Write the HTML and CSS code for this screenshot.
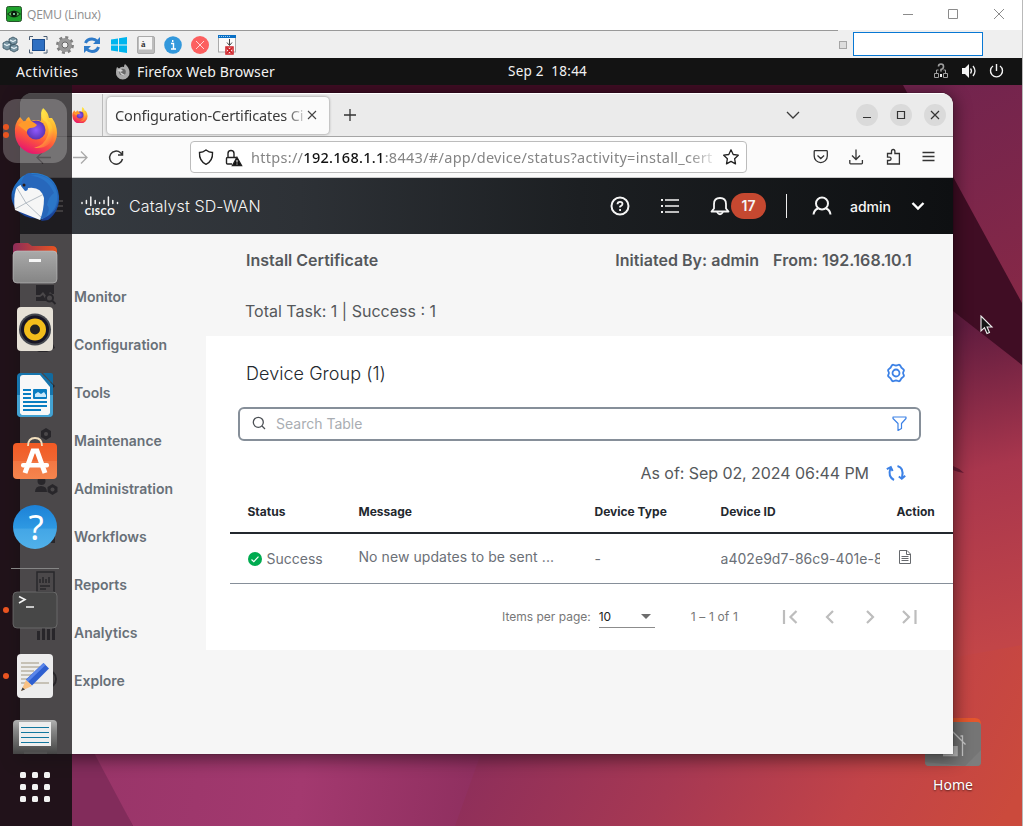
FILE: index.html
```html
<!DOCTYPE html>
<html lang="en">
<head>
<meta charset="utf-8">
<title>QEMU (Linux)</title>
<link rel="stylesheet" href="styles.css">
</head>
<body>
<div class="viewer">
  <header class="viewer-title">
    <svg class="viewer-logo" width="16" height="16" viewBox="0 0 16 16"><rect x=".5" y=".5" width="15" height="15" rx="2" fill="#1fa22c" stroke="#26532a"/><path d="M1 8Q8 1 15 8Q8 15 1 8Z" fill="#123a16"/><path d="M2.500 8Q8 3.500 13.500 8Q8 12.500 2.500 8Z" fill="#5fbd62"/><circle cx="8" cy="8" r="3" fill="#0a1a0c"/><circle cx="8" cy="8" r="1" fill="#9fb"/></svg>
    <span class="viewer-name">QEMU (Linux)</span>
    <svg class="viewer-controls" width="120" height="30" viewBox="0 0 120 30" fill="none" stroke="#8b8b8b"><path d="M1 14.500h10M46.500 9.500h9v9h-9zM92 9l10 10M102 9l-10 10"/></svg>
  </header>
  <div class="viewer-tools">
    <svg width="240" height="28" viewBox="0 0 240 28">
      <g stroke="#35505f" stroke-width=".8" fill="#7895a3"><path d="M9 9l4-2 4 2v4l-4 2-4-2zM3 13l4-2 4 2v5l-4 2-4-2zM10 16l4-2 4 2v4l-4 2-4-2z"/><path d="M4 14l3 1.500 3-1.500M10 10l3 1.500 3-1.500M11 17l3 1.500 3-1.500" stroke="#e3eff4" stroke-width="1.300" fill="none"/></g>
      <rect x="32.500" y="9.500" width="12" height="11" fill="#2e6fc2" stroke="#1d4d8d"/><path d="M29.500 10V6.500H33M43.500 6.500H47V10M47 19.500V23h-3.500M33 23h-3.500v-3.500" fill="none" stroke="#4a5d73"/>
      <g transform="translate(65 15)"><circle r="5" fill="none" stroke="#989898" stroke-width="4"/><circle r="7.700" fill="none" stroke="#808080" stroke-width="2.500" stroke-dasharray="3.020 3.027"/><circle r="3" fill="#efefef" stroke="#666"/></g>
      <g fill="none" stroke="#2f7bc9" stroke-width="3"><path d="M85.500 13Q87 9 92 9q3 0 5.500 2.500M98.500 17Q97 21.500 92 21.500q-3 0-5.500-2.500"/></g><path d="M100 7v7h-7zM84 23v-7h7z" fill="#2f7bc9"/>
      <path d="M111 9.500l7-1v6h-7zM119 8.300l8-1.200v7.400h-8zM111 15.500h7v6l-7-1zM119 15.500h8v7.400l-8-1.200z" fill="#00b5ee"/>
      <rect x="137.500" y="6.500" width="17" height="17" rx="1.500" fill="#bdbdbd" stroke="#aaa"/><rect x="139" y="7" width="13" height="12.500" fill="#f5f5f5"/>
      <circle cx="173" cy="15" r="8.800" fill="#3298dc"/><path d="M171 13.500h2.500v5M171 19h5M172.700 10v2" stroke="#fff" stroke-width="1.400" fill="none"/>
      <circle cx="200" cy="15" r="9" fill="#fc5f5f"/><path d="M196 11l8 8M204 11l-8 8" stroke="#ffd5d5"/>
      <rect x="218.500" y="6" width="17" height="16" fill="#fafafa" stroke="#aaa"/><path d="M218 5h18v3h-18z" fill="#0a70c5"/><path d="M219 6.500h12" stroke="#9fd0f5" stroke-dasharray="1 1"/><path d="M229.500 9v6M227 12.500l2.500 3 2.500-3" stroke="#444" fill="none"/><rect x="226" y="17" width="7" height="7" fill="#fff" stroke="#cf2027" stroke-width="1.500"/><path d="M227 18l5 5m0-5l-5 5" stroke="#cf2027" stroke-width="1.800"/>
      <text x="141" y="17" class="key-glyph">à</text>
    </svg>
    <div class="viewer-side"><i class="mini-box"></i><i class="display-box"></i></div>
  </div>

  <nav class="panel">
    <span class="activities">Activities</span>
    <span class="panel-app"><svg width="16" height="16" viewBox="0 0 16 16"><path d="M2 3l2 1.500Q6 2 9 3q0-2 1-3 4 3 4.500 8A6.800 6.800 0 1 1 1 8Q1 5 2 3z" fill="#a9a9a9"/><circle cx="7.500" cy="8" r="3.300" fill="#686868"/><path d="M2 6l4-1 2 2-3 1q1 4 5 3" fill="#d0d0d0"/></svg><b>Firefox Web Browser</b></span>
    <span class="clock">Sep 2&nbsp; 18:44</span>
    <svg class="tray" width="76" height="20" viewBox="0 0 76 20" fill="none"><g stroke="#a0a0a0"><path d="M3.500 12.500h4v4h-4zM12.500 12.500h4v4h-4zM5.500 12v-3h2M14.500 12v-3h-2"/><path d="M7.500 5.500q0-2.500 2.500-2.500t2.500 2.500T10 8.500v2" stroke-width="1.600"/></g><path d="M10 13v3" stroke="#eee" stroke-width="2"/><path d="M31 7h3l4-4v14l-4-4h-3z" fill="#f4f4f4"/><path d="M39.500 7.500q2 2.500 0 5M42 5q4 5 0 10" stroke="#eee" stroke-width="1.300"/><path d="M62 5a6 6 0 1 0 7 0M65.500 3v7" stroke="#f4f4f4" stroke-width="1.400"/></svg>
  </nav>

  <div class="desktop">
    <svg class="wallpaper" width="1022" height="741" viewBox="0 85 1022 741">
      <defs>
        <linearGradient id="base" gradientUnits="userSpaceOnUse" x1="500" y1="560" x2="1000" y2="826"><stop offset="0" stop-color="#852b5d"/><stop offset=".45" stop-color="#a63853"/><stop offset=".75" stop-color="#c14348"/><stop offset="1" stop-color="#cb4a3c"/></linearGradient>
        <linearGradient id="right" gradientUnits="userSpaceOnUse" x1="945" y1="330" x2="1022" y2="640"><stop offset="0" stop-color="#601c3f"/><stop offset=".45" stop-color="#a8364d"/><stop offset="1" stop-color="#c24548"/></linearGradient>
        <linearGradient id="top" gradientUnits="userSpaceOnUse" x1="930" y1="90" x2="1022" y2="290"><stop offset="0" stop-color="#72244e"/><stop offset="1" stop-color="#852847"/></linearGradient>
        <linearGradient id="leaf" gradientUnits="userSpaceOnUse" x1="100" y1="760" x2="500" y2="826"><stop offset="0" stop-color="#993569"/><stop offset=".5" stop-color="#a3396f"/><stop offset="1" stop-color="#8c2e5d"/></linearGradient>
      </defs>
      <rect y="85" width="1022" height="741" fill="url(#base)"/>
      <path d="M940 300h82v345l-82 15z" fill="url(#right)"/>
      <path d="M0 85h1022v280L953 311 500 430 0 700z" fill="#400d24"/>
      <path d="M903 85h119v218z" fill="url(#top)"/>
      <path d="M953 466q6 2 11 7-7-1-11-3z" fill="#6c1c36"/>
      <path d="M0 560h72l61 266H0z" fill="#401027"/>
      <path d="M72 700l61 126H72z" fill="#822c5b"/>
      <path d="M66 700h434l-45 126H133z" fill="url(#leaf)"/>
    </svg>

    <div class="home">
      <svg width="56" height="48" viewBox="0 0 56 48"><path d="M0 8q0-8 8-8h42q6 0 6 6v20H0z" fill="#e4572d"/><rect y="4" width="56" height="44" rx="4" fill="#757575"/><path d="M0 44q0 4 4 4h48q4 0 4-4V32L40 48z" fill="#7d7d7d"/><path d="M16 29L28 14l12.500 12.500M35.500 18h2v5M37.500 24v14M18 37.500h14V28" fill="none" stroke="#c8c8c8" stroke-width="1.300"/><path d="M28 28h4v10H18v-4h10z" fill="#bcbcbc"/></svg>
      <span>Home</span>
    </div>

    <main class="browser">
      <div class="tabs">
        <div class="pinned"><svg width="16" height="16" viewBox="0 0 44 44"><use href="#fox"/></svg></div>
        <div class="tab"><span class="tab-text">Configuration-Certificates Ci</span><svg width="10" height="10" viewBox="0 0 10 10" stroke="#444" stroke-width="1.100"><path d="M1 1l8 8M9 1l-8 8"/></svg></div>
        <svg class="plus" width="12" height="12" viewBox="0 0 12 12" stroke="#333" stroke-width="1.300"><path d="M6 0v12M0 6h12"/></svg>
        <svg class="chev" width="14" height="8" viewBox="0 0 14 8" fill="none" stroke="#3b3b3b" stroke-width="1.300"><path d="M1 1l6 6 6-6"/></svg>
        <div class="win-buttons">
          <svg viewBox="0 0 22 22"><path d="M7 13.500h8"/></svg>
          <svg viewBox="0 0 22 22"><path d="M7.500 7.500h7v7h-7z"/></svg>
          <svg viewBox="0 0 22 22"><path d="M7 7l8 8M15 7l-8 8"/></svg>
        </div>
      </div>
      <div class="navbar">
        <svg class="nav-arrows" width="110" height="40" viewBox="0 0 110 40" fill="none" stroke-width="1.300"><path d="M31 20.500H17M23 14.500l-6 6 6 6" stroke="#555"/><path d="M53 20.500h14M61 14.500l6 6-6 6" stroke="#a9a9a9"/><path d="M102.500 22a6.500 6.500 0 1 1-2-6.200l2 1.800M102.500 14v4h-4.500" stroke="#333" stroke-width="1.500"/></svg>
        <div class="urlbar">
          <svg width="50" height="22" viewBox="0 0 50 22" fill="none" stroke="#222" stroke-width="1.400"><path d="M9 4q3 2.300 6.500 2.500Q16 15 9 18.300 2 15 2.500 6.500 6 6.300 9 4z"/><path d="M35 18h-4.500q-1 0-1-1v-4.500q0-1 1-1h8.500v1M31 11V7.500a3 3 0 0 1 6 0V11"/><path d="M40 11.500l4.500 8h-9z" fill="#111"/><path d="M40 14v2.500M40 17.500v1" stroke="#fff" stroke-width="1"/></svg>
          <span class="url">https://<b>192.168.1.1</b>:8443/#/app/device/status?activity=install_cert</span>
          <svg width="16" height="16" viewBox="0 0 16 16" fill="none" stroke="#222" stroke-width="1.300" stroke-linejoin="round"><path d="M8 .8l2.200 4.700 5.100.7-3.700 3.500.9 5.200L8 12.400l-4.500 2.500.9-5.200L.7 6.200l5.100-.7z"/></svg>
        </div>
        <svg class="nav-tools" width="126" height="20" viewBox="0 0 126 20" fill="none" stroke="#333" stroke-width="1.300"><path d="M2.200 4.500q0-.8.800-.8h11.500q.800 0 .8.800v4.500a6.550 6.550 0 0 1-13.100 0zM5.500 8.500l3.300 3 3.300-3"/><path d="M44 2.500v10M40 8.500l4 4 4-4M37.800 13v3q0 .8.800.8h11q.8 0 .8-.8v-3"/><path d="M75.500 6.500h4v-2q0-2 1.700-2t1.700 2v2h4.500v10.500H75.500v-3.500h1.800q1.800 0 1.800-1.700t-1.800-1.700h-1.800z"/><path d="M110.500 5.500h12M110.500 9.500h12M110.500 13.500h12"/></svg>
      </div>

      <div class="app-header">
        <svg class="burger" width="12" height="14" viewBox="0 0 12 14" stroke="#eee" stroke-width="1.500"><path d="M0 2h12M0 7h12M0 12h12"/></svg>
        <div class="cisco">
          <svg width="38" height="11" viewBox="0 0 38 11" stroke="#f4f4f4" stroke-width="1.500" stroke-linecap="round"><path d="M1 6.500v1M5.400 4.500v3M9.800 1v8.500M14.200 4.500v3M18.600 6.500v1M23 4.500v3M27.400 1v8.500M31.800 4.500v3M36.500 6.500v1"/></svg>
          <span>CISCO</span>
        </div>
        <span class="product">Catalyst SD-WAN</span>
        <svg class="header-icons" width="122" height="24" viewBox="0 0 122 24" fill="none" stroke="#f5f5f5" stroke-width="2"><circle cx="10" cy="12" r="8.500"/><path d="M7.500 10.300q0-2.500 2.500-2.500t2.500 2.200q0 1.400-2.400 2.600v1M10.100 15v2" stroke-width="1.800"/><path d="M55 6h14M55 12h14M55 18h14" stroke-width="1.700"/><path d="M51 6h2M51 12h2M51 18h2"/><path d="M101.500 17.500h17l-2.500-3V10q0-6-6-6t-6 6v4.500z" stroke-width="1.800" stroke-linejoin="round"/><path d="M107 18q3 4.500 6 0" stroke-width="1.800"/></svg>
        <span class="count">17</span>
        <i class="divider"></i>
        <svg class="user" width="20" height="20" viewBox="0 0 20 20" fill="none" stroke="#f5f5f5" stroke-width="2"><circle cx="10" cy="7.500" r="6"/><path d="M1.500 18.500Q2 14 6 12.500M18.500 18.500Q18 14 14 12.500"/></svg>
        <span class="admin">admin</span>
        <svg class="down" width="14" height="10" viewBox="0 0 14 10" fill="none" stroke="#fff" stroke-width="2.400"><path d="M1.500 2L7 7.500 12.500 2"/></svg>
      </div>

      <div class="app">
        <aside class="menu">
          <div><svg viewBox="0 0 20 20"><path d="M1-1h18v9h-2l-2-2-3 5-4-5-3 3H1zM1 11h4l3-2 3 5v1H1z"/><circle cx="14.500" cy="12" r="3.500" fill="none" stroke="#5f666d" stroke-width="2"/><path d="M17 14.500l3.500 3.500" stroke="#5f666d" stroke-width="2"/></svg><span>Monitor</span></div>
          <div><svg viewBox="0 0 20 20"><path d="M2 18L18 10l2 4-8 4z"/></svg><span>Configuration</span></div>
          <div><svg viewBox="0 0 20 20"><path d="M2 12L16 0l4 4L8 16z"/></svg><span>Tools</span></div>
          <div><svg viewBox="0 0 20 20"><path d="M11-2l5 3v6l-5 3-5-3V1z"/><circle cx="11" cy="4" r="2" fill="#f6f6f6"/></svg><span>Maintenance</span></div>
          <div><svg viewBox="0 0 20 20"><circle cx="6.500" cy="3" r="4"/><path d="M0 14q0-6 6-6t6 6z"/><path d="M17.500 6l5 3v5l-5 3-5-3V9z"/><circle cx="17.500" cy="11.500" r="2" fill="#f6f6f6"/></svg><span>Administration</span></div>
          <div><svg viewBox="0 0 20 20"><path d="M4 8h16v9H4z"/></svg><span>Workflows</span></div>
          <div><svg viewBox="0 0 20 20"><path d="M2-2h17v20H2zM5 12h10M5 15h6M5 9V5M8 9V3M11 9V5M14 9V3" fill="none" stroke="#5f666d" stroke-width="1.500"/></svg><span>Reports</span></div>
          <div><svg viewBox="0 0 20 20"><path d="M2 9h3v9H2zM7 5h3v13H7zM12 7h3v11h-3zM17 3h3v15h-3z"/></svg><span>Analytics</span></div>
          <div><svg viewBox="0 0 20 20"><circle cx="12" cy="9" r="9" fill="none" stroke="#5f666d" stroke-width="2"/></svg><span>Explore</span></div>
        </aside>
        <section class="page">
          <div class="page-head"><span class="page-title">Install Certificate</span><span class="by">Initiated By: admin</span><span class="from">From: 192.168.10.1</span></div>
          <div class="summary"><span>Total Task: 1 | Success : 1</span></div>
          <div class="card">
            <div class="card-head"><span>Device Group (1)</span><svg width="20" height="20" viewBox="0 0 20 20" fill="none" stroke="#3d82e6" stroke-width="1.800" stroke-linejoin="round"><path d="M5.500 3Q6.300 1.300 8 2q2 1 4 0 1.700-.7 2.500 1 .5 1.800 2.500 3 1.500 1 .5 2.500-1 1.500 0 3 1 1.500-.5 2.500-2 1.200-2.500 3-.8 1.700-2.500 1-2-1-4 0-1.700.7-2.500-1-.5-1.800-2.500-3-1.500-1-.5-2.500 1-1.500 0-3-1-1.500.5-2.500 2-1.200 2.500-3z"/><circle cx="10" cy="10" r="3.500"/></svg></div>
            <div class="search"><svg width="14" height="14" viewBox="0 0 14 14" fill="none" stroke="#4b4f54" stroke-width="1.300"><circle cx="6.300" cy="6.300" r="5"/><path d="M10 10l3 3"/></svg><span>Search Table</span><svg width="15" height="15" viewBox="0 0 15 15" fill="none" stroke="#3d82e6" stroke-width="1.200" stroke-linejoin="round"><path d="M1 1h13v1.500L9.500 7.500v5l-3.500 2v-7L1 2.500z"/></svg></div>
            <div class="asof"><span>As of: Sep 02, 2024 06:44 PM</span><svg width="20" height="18" viewBox="0 0 20 18" fill="none" stroke="#3d82e6" stroke-width="2"><path d="M8 16Q1.500 12.500 4.500 4M.8 5.200l4-2 1.800 3.800M11.500 2Q18.500 4 16 13.500M12.800 12.500l3 2.300 3.400-3"/></svg></div>
            <div class="row head"><span>Status</span><span>Message</span><span>Device Type</span><span>Device ID</span><span>Action</span></div>
            <div class="row data">
              <span class="status"><svg width="14" height="14" viewBox="0 0 14 14"><circle cx="7" cy="7" r="7" fill="#00ab50"/><path d="M3.500 7.500l2.300 2.200 4.700-5" fill="none" stroke="#fff" stroke-width="1.200"/></svg><b>Success</b></span>
              <span class="msg">No new updates to be sent ...</span><span>-</span><span class="devid">a402e9d7-86c9-401e-8</span>
              <span class="act"><svg width="12" height="14" viewBox="0 0 12 14" fill="none" stroke="#66696d"><path d="M.5.5H8L11.500 4v9.500H.5zM7.500.5v4h4M2.500 6.500h7M2.500 8.500h7M2.500 10.500h7"/></svg></span>
            </div>
            <div class="pager">
              <span class="ipp">Items per page:</span><span class="select">10<i></i></span><span class="range">1 – 1 of 1</span>
              <svg width="136" height="16" viewBox="0 0 136 16" fill="none" stroke="#bdbdbd" stroke-width="2.200"><path d="M2 1v14M14.500 2l-6 6 6 6M51 2l-6 6 6 6M85 2l6 6-6 6M121 2l6 6-6 6M133.500 1v14"/></svg>
            </div>
          </div>
        </section>
      </div>
    </main>

    <div class="dock">
      <svg class="slot" viewBox="0 0 72 66">
        <defs>
          <linearGradient id="fire" x1=".8" y1="0" x2=".4" y2="1"><stop offset="0" stop-color="#fff04a"/><stop offset=".35" stop-color="#ffb02c"/><stop offset=".68" stop-color="#ff593a"/><stop offset="1" stop-color="#e6166f"/></linearGradient>
          <linearGradient id="tail" x1=".4" y1="0" x2=".8" y2="1"><stop offset="0" stop-color="#ffe94d"/><stop offset=".6" stop-color="#ffc232"/><stop offset="1" stop-color="#ff4b45"/></linearGradient>
          <radialGradient id="globe"><stop offset="0" stop-color="#9059ff"/><stop offset="1" stop-color="#5b35b5"/></radialGradient>
          <g id="fox"><path d="M6 9l5 6q1-5 4-6l2 4q5-2 10 0 0-8 2-13 5 4 6 10l3 0q5 7 5 15a21 21 0 0 1-42 0Q0 16 6 9z" fill="url(#fire)"/><path d="M28 1q-3 9 4 13 4 7 2 13-4 11-14 13 18 1 19-14 0-7-3-12-1 0-2-1-2-8-6-12z" fill="url(#tail)"/><circle cx="22" cy="22" r="9.500" fill="url(#globe)"/><path d="M4 17q6-5 10-4 5 0 9 4-2 3-7 3-3 1-3 4-5-4-9-7z" fill="#ff9a2b"/></g>
        </defs>
        <rect x="3" y="2" width="64" height="64" rx="14" fill="#fff" fill-opacity=".23"/><circle cx="6" cy="30" r="3" fill="#e95420"/><circle cx="6" cy="38" r="3" fill="#e95420"/><use href="#fox" x="14" y="11"/>
      </svg>
      <svg class="slot" viewBox="0 0 72 66"><defs><linearGradient id="bird" x2="0" y2="1"><stop offset="0" stop-color="#257fd1"/><stop offset="1" stop-color="#173b91"/></linearGradient></defs><path d="M18 18Q21 12 32 10q24 0 27 23 1 15-11 24l-7 1 2-3q-17 3-27-9-10-14 2-28z" fill="url(#bird)"/><path d="M16 26q3-5 9-4l19 4 1 27-5 4-25-10q-2-11 1-21z" fill="#f6f6f6"/><path d="M17 25l9 15 18-9M15 46l11-6M26 40l17 16" fill="none" stroke="#b4bcc4" stroke-width="1"/><path d="M24 13q-3 5-3 10l4 5q3 0 3-3 13-2 16 10 0 12-4 22 21-8 18-26-5-20-26-20-4-3-8 2z" fill="#2767bb"/><path d="M30 13q16 0 24 17-5 3-7 12 4 3-1 12 13-9 11-24-5-18-22-18z" fill="#2f80d0" opacity=".6"/><circle cx="24" cy="22" r="1.500" fill="#2b1b16"/></svg>
      <svg class="slot" viewBox="0 0 72 66"><defs><linearGradient id="folder" x2="1"><stop stop-color="#8e2c59"/><stop offset="1" stop-color="#e95420"/></linearGradient><linearGradient id="grey" x2="0" y2="1"><stop stop-color="#a9a9a9"/><stop offset="1" stop-color="#858585"/></linearGradient></defs><path d="M13 18q0-4 4-4h11l4 3h20q5 0 5 5v10H13z" fill="url(#folder)"/><rect x="13" y="22" width="44" height="32" rx="4" fill="url(#grey)" stroke="#c2c2c2" stroke-width=".6"/><rect x="29" y="30" width="12" height="3" fill="#f6f6f6"/></svg>
      <svg class="slot" viewBox="0 0 72 66"><rect x="17" y="12" width="36" height="44" rx="4" fill="#e6e1d7"/><circle cx="35" cy="34.500" r="16" fill="#45484f"/><circle cx="35" cy="34.500" r="14" fill="#171625"/><circle cx="35" cy="34.500" r="11" fill="#f2bd1b"/><circle cx="35" cy="34.500" r="5" fill="#222"/></svg>
      <svg class="slot" viewBox="0 0 72 66"><path d="M17 16q0-4 4-4h20l12 12v28q0 4-4 4H21q-4 0-4-4z" fill="#1675ad"/><path d="M20 17q0-3 3-3h17l10 12v26q0 2-2 2H22q-2 0-2-2z" fill="#f8f8f8"/><path d="M17 34h3v18q0 2 2 2h26q2 0 2-2V34h3v18q0 4-4 4H21q-4 0-4-4z" fill="#43a2d2"/><path d="M43 12h8q2 0 2 2v9z" fill="#126a9e"/><path d="M23 29h8M23 33h8M23 37h8M23 41h24M23 45h24M23 49h18" stroke="#0a7dc1" stroke-width="2"/><rect x="33" y="28" width="14" height="10" rx="1" fill="#0a7dc1"/><path d="M35 36v-3l3-2 3 2 3-2 2 3v2z" fill="#c9e9fb"/></svg>
      <svg class="slot" viewBox="0 0 72 66"><defs><linearGradient id="bag" x2="0" y2="1"><stop stop-color="#f25a24"/><stop offset=".5" stop-color="#f06733"/><stop offset=".51" stop-color="#f27743"/><stop offset="1" stop-color="#f5854e"/></linearGradient></defs><rect x="13" y="16" width="44" height="36" rx="4" fill="url(#bag)"/><path d="M28 19q0-8 7-8t7 8" fill="none" stroke="#f2dfbd" stroke-width="1.800"/><path d="M25 46l8-22h4l8 22" fill="none" stroke="#fff" stroke-width="5"/><rect x="21" y="36" width="28" height="4.500" rx="2" fill="#fff"/></svg>
      <svg class="slot" viewBox="0 0 72 66"><defs><linearGradient id="help" x2="0" y2="1"><stop stop-color="#1c81d7"/><stop offset=".53" stop-color="#2e99e2"/><stop offset=".54" stop-color="#43a6e6"/><stop offset="1" stop-color="#51b1ea"/></linearGradient></defs><circle cx="35" cy="34" r="22" fill="url(#help)"/><text x="36" y="47" class="help-mark">?</text></svg>
      <i class="dock-line"></i>
      <svg class="slot" viewBox="0 0 72 66"><circle cx="6" cy="34" r="3" fill="#e95420"/><rect x="13" y="16" width="44" height="36" rx="4" fill="#474747" stroke="#777" stroke-width=".7"/><path d="M19 20.500l6 3-6 3.500M26 31h8" fill="none" stroke="#f4f4f4" stroke-width="1.600"/></svg>
      <svg class="slot" viewBox="0 0 72 66"><circle cx="6" cy="34" r="3" fill="#e95420"/><rect x="17" y="12" width="36" height="44" rx="4" fill="#ededed"/><path d="M21 21h18M21 25h26M21 29h13M21 33h12M21 37h10M21 41h28" stroke="#c6c1b6" stroke-width="2"/><path d="M43.500 21l5.500 5.500-17 17-6-6z" fill="#2e5fd0"/><path d="M43.500 21l2 2-17.500 17-2-2z" fill="#5b86ea"/><path d="M26 38l6 6-11 5z" fill="#f9c184"/><path d="M22.500 45.500l2.500 2-4 1.500z" fill="#444"/></svg>
      <svg class="slot last" viewBox="0 0 72 46"><defs><linearGradient id="tray" x2="0" y2="1"><stop stop-color="#b2b2b2"/><stop offset=".3" stop-color="#888"/><stop offset="1" stop-color="#444"/></linearGradient></defs><path d="M13 16q0-4 4-4h36q4 0 4 4v30H13z" fill="url(#tray)"/><path d="M19 14h32v24H19z" fill="#eee"/><path d="M21 19.500h28M21 24.500h28M21 29.500h28M21 34.500h28" stroke="#12779e"/><path d="M24 43.500h23v3H24z" fill="#505050"/></svg>
      <svg class="apps" width="30" height="30" viewBox="0 0 30 30" fill="#f2f2f2"><g id="dots"><rect width="6" height="6" rx="1.500"/><rect x="12" width="6" height="6" rx="1.500"/><rect x="24" width="6" height="6" rx="1.500"/></g><use href="#dots" y="12"/><use href="#dots" y="24"/></svg>
    </div>
    <svg class="cursor" width="14" height="20" viewBox="0 0 14 20"><path d="M1 1v15l3.500-3.300L7 18.500l2.500-1-2.400-5.500H12z" fill="#151515" stroke="#eee" stroke-width="1.100"/></svg>
  </div>
</div>
</body>
</html>
```
FILE: styles.css
```css
* { box-sizing: border-box; }
body { margin: 0; font-family: Inter, sans-serif; overflow: hidden; }
svg { display: block; flex: none; }
span { white-space: nowrap; }
.viewer { width: 1023px; height: 826px; border-right: 1px solid #b9b9b9; display: flex; flex-direction: column; overflow: hidden; }
.viewer-title { height: 30px; flex: none; display: flex; align-items: center; background: #fff; padding-left: 6px; }
.viewer-logo { margin-top: -2px; }
.viewer-name { margin: -2px 0 0 5px; font: 12px "Open Sans", sans-serif; letter-spacing: -.2px; color: #8e8e8e; }
.viewer-controls { margin-left: auto; }
.viewer-tools { height: 28px; flex: none; background: linear-gradient(90deg, #999 838px, #efefef 838px) top/100% 1px no-repeat #efefef; display: flex; justify-content: space-between; }
.key-glyph { font: bold 9px "Liberation Serif", serif; fill: #333; }
.viewer-side { display: flex; align-items: center; gap: 6px; padding-right: 39px; }
.mini-box { width: 8px; height: 8px; border: 1px solid #a5a5a5; background: #ddd; margin-top: 2px; }
.display-box { width: 130px; height: 24px; border: 1px solid #0878d4; background: #fff; }

.panel { height: 27px; flex: none; background: #131313; color: #f2f2f2; display: grid; grid-template-columns: 115px 393px 423px auto; align-items: center; font: 14px "Noto Sans", sans-serif; }
.activities { padding-left: 16px; letter-spacing: .4px; }
.panel-app { display: flex; align-items: center; gap: 6px; }
.panel-app b { font-weight: 400; letter-spacing: .13px; }
.clock { font-size: 13.500px; letter-spacing: .25px; margin-top: -2px; }
.tray { margin-top: -1px; }

.desktop { position: relative; height: 741px; flex: none; overflow: hidden; }
.wallpaper { position: absolute; left: 0; top: 0; }
.home { position: absolute; left: 925px; top: 633px; width: 56px; display: flex; flex-direction: column; align-items: center; color: #fff; font: 14px/20px "Noto Sans", sans-serif; gap: 9px; text-shadow: 0 1px 2px rgba(0,0,0,.6); }
.browser { position: absolute; left: 20px; top: 8px; width: 933px; height: 661px; border-radius: 12px 12px 0 0; overflow: hidden; background: #f6f6f6; box-shadow: 0 3px 16px 3px rgba(0,0,0,.45), 0 0 1px #000; display: flex; flex-direction: column; }
.tabs { height: 44px; flex: none; background: #ebebeb; border-top: 1px solid #fff; border-bottom: 1px solid #a5a5a5; display: flex; align-items: center; }
.pinned { width: 83px; height: 42px; border-right: 1px solid #bbb; padding: 13px 0 0 52px; }
.tab { width: 222px; height: 37px; margin-left: 4px; border-radius: 4px; background: #fbfbfb; box-shadow: 0 0 3px rgba(0,0,0,.45); display: flex; align-items: center; padding-left: 8px; gap: 3px; }
.tab-text { width: 189px; overflow: hidden; font: 14.500px "Noto Sans", sans-serif; letter-spacing: -.12px; color: #3b3b3b; -webkit-mask-image: linear-gradient(90deg, #000 170px, transparent 194px); }
.plus { margin-left: 15px; }
.chev { margin-left: 430px; }
.win-buttons { margin-left: 56px; display: flex; gap: 12px; }
.win-buttons svg { width: 22px; height: 22px; background: #dadada; border-radius: 50%; fill: none; stroke: #333; stroke-width: 1.200; }
.navbar { height: 41px; flex: none; background: #fbfbfb; border-bottom: 1px solid #ccc; display: flex; align-items: center; }
.urlbar { width: 557px; height: 32px; margin-left: 60px; border: 1px solid #bcbcbc; border-radius: 4px; background: #fff; display: flex; align-items: center; padding-left: 6px; }
.url { width: 463px; margin-left: 4px; margin-right: 9px; overflow: hidden; font: 14.500px "Noto Sans", sans-serif; letter-spacing: .29px; color: #858585; -webkit-mask-image: linear-gradient(90deg, #000 438px, transparent 468px); }
.url b { font-weight: 500; color: #111; }
.nav-tools { margin-left: 65px; }

.app-header { height: 56px; flex: none; background: linear-gradient(90deg, #373c42 0, #2d3136 30%, #1c1f22 60%, #0e1012 100%); color: #f6f6f6; display: flex; align-items: center; }
.burger { margin-left: 31px; }
.cisco { width: 38px; margin-left: 18px; display: flex; flex-direction: column; align-items: center; }
.cisco span { font: 900 9.500px/10px Lato, sans-serif; letter-spacing: .5px; }
.product { width: 133px; margin-left: 10px; font-size: 16px; font-weight: 300; letter-spacing: .13px; }
.header-icons { margin-left: 348px; }
.count { width: 35px; height: 26px; border-radius: 13px; background: #c54830; font: 600 14px/26px Inter, sans-serif; text-align: center; margin-left: -1px; }
.divider { width: 1px; height: 24px; background: #eee; margin-left: 20px; }
.user { margin-left: 25px; }
.admin { width: 42px; margin-left: 18px; font-size: 14px; font-weight: 500; }
.down { margin-left: 19px; }

.app { flex: 1; display: flex; }
.menu { width: 186px; padding-top: 38px; font-size: 14px; font-weight: 600; color: #687078; }
.menu div { height: 48px; display: flex; align-items: center; padding-left: 15px; }
.menu span { margin-left: 19px; }
.menu svg { width: 20px; height: 20px; fill: #5f666d; overflow: visible; }
.page { width: 747px; display: flex; flex-direction: column; color: #55585b; font-size: 16px; }
.page-head { height: 52px; display: flex; align-items: center; padding: 0 41px 0 40px; font-weight: 600; }
.page-head span { margin-top: -1px; }
.page-head .by { margin-left: auto; letter-spacing: .03px; }
.page-head .from { margin-left: 14px; letter-spacing: .12px; }
.summary { height: 50px; padding-left: 39px; display: flex; align-items: center; }
.card { height: 314px; background: #fff; }
.card-head { height: 71px; padding: 3px 47px 0 40px; display: flex; align-items: center; justify-content: space-between; font-size: 18px; font-weight: 300; letter-spacing: .05px; color: #23282e; }
.search { width: 683px; height: 34px; margin-left: 32px; border: 2px solid #868f99; border-radius: 6px; display: flex; align-items: center; padding: 0 12px 2px; font-size: 14px; color: #a9adb2; }
.search span { margin: 0 auto 0 10px; }
.asof { height: 50px; padding: 13px 47px 0 0; display: flex; justify-content: flex-end; align-items: center; gap: 17px; letter-spacing: -.06px; }
.row { margin-left: 24px; padding-left: 17.500px; display: grid; grid-template-columns: 111px 236px 126px 176px 1fr; align-items: center; }
.row.head { height: 43px; border-bottom: 2px solid #23282e; color: #23282e; font-size: 12px; font-weight: 700; }
.row.data { height: 50px; border-bottom: 1px solid #868f99; font-size: 14px; color: #6b7077; }
.status { display: flex; align-items: center; gap: 5px; }
.status b { font-weight: 400; }
.msg { margin-top: -4px; letter-spacing: .07px; }
.devid { width: 159px; overflow: hidden; letter-spacing: .04px; }
.act { padding: 0 0 4px 2px; }
.pager { height: 66px; display: flex; align-items: center; padding-right: 35px; justify-content: flex-end; font-size: 12px; color: #777; }
.pager span { position: static; margin-top: -1px; }
.select { width: 56px; height: 22px; line-height: 22px; border-bottom: 1px solid #8c8c8c; color: #222; display: flex; align-items: center; justify-content: space-between; padding-right: 4px; }
.pager .select { margin-left: 8px; margin-top: 0; }
.select i { border: 5px solid transparent; border-top-color: #6d6d6d; border-bottom: 0; }
.pager .range { margin: -1px 44px 0 36px; letter-spacing: .15px; }

.dock { position: absolute; left: 0; top: 0; width: 72px; height: 741px; background: rgba(24,20,22,.77); padding-top: 12px; display: flex; flex-direction: column; }
.slot { width: 72px; height: 66px; }
.dock-line { width: 48px; height: 1px; margin: 9px 0 7px 11px; background: #858585; flex: none; }
.slot.last { height: 46px; }
.apps { margin: 18px 0 0 20px; }
.help-mark { font: 35px "Noto Sans", sans-serif; fill: #fff; text-anchor: middle; }
.cursor { position: absolute; left: 980px; top: 230px; }
```
